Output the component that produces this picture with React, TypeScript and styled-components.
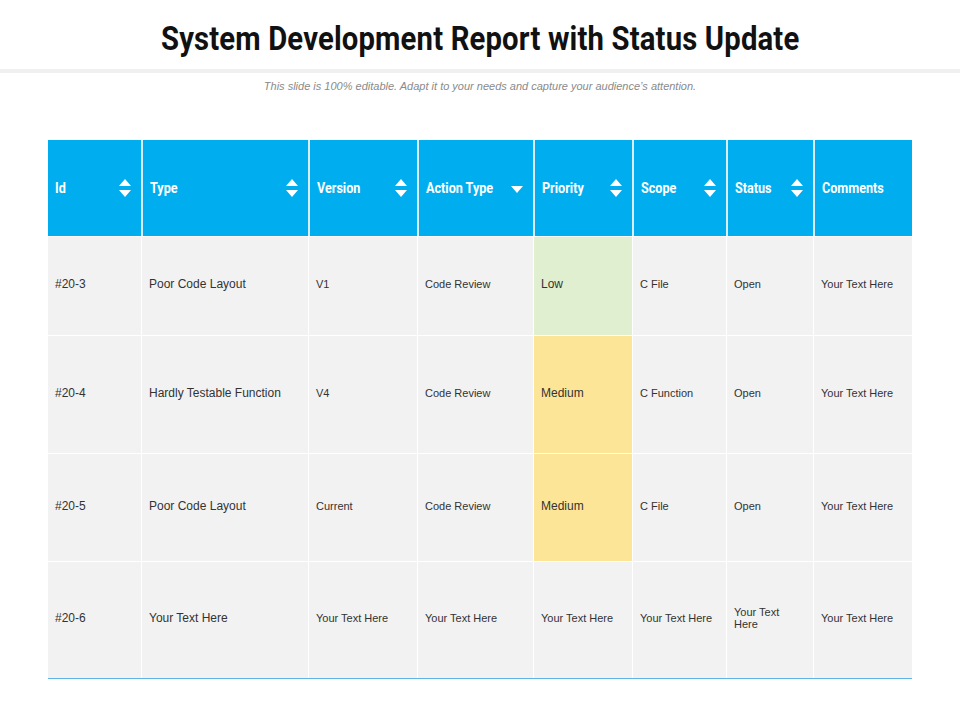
import React from "react";
import styled, { createGlobalStyle } from "styled-components";

const Global = createGlobalStyle`
  body { margin: 0; background: #fff; font-family: "Liberation Sans", Arial, sans-serif; }
`;
const Page = styled.div`width: 960px; height: 720px; display: flex; flex-direction: column; align-items: center;`;
const Title = styled.h1`
  margin: 14px 0 0; height: 48px; font-family: "Roboto", "Liberation Sans", sans-serif; font-weight: 700;
  font-size: 34px; line-height: 48px; color: #111; transform: scaleX(0.86); letter-spacing: 0.2px; white-space: nowrap;
`;
const Rule = styled.div`width: 960px; height: 4px; background: #f0f0f0; margin-top: 7px;`;
const Sub = styled.div`margin-top: 7px; font-size: 11px; font-style: italic; color: #8a8a8a;`;
const Table = styled.div`
  margin-top: 48px; width: 864px; display: grid;
  grid-template-columns: 93px 167px 109px 116px 99px 94px 87px 99px;
  grid-template-rows: 96px 99px 118px 108px 117px;
  border-bottom: 1px solid #5fb4e6;
`;
const Head = styled.div<{ first?: boolean }>`
  background: #00aeef; color: #fff; display: flex; align-items: center; justify-content: space-between;
  padding: 0 10px 0 7px; border-left: ${p => (p.first ? "none" : "2px solid #d9eef8")};
  font-family: "Roboto", "Liberation Sans", sans-serif; font-weight: 700; font-size: 14px;
`;
const HText = styled.span`display: inline-block; transform: scaleX(0.9); transform-origin: left;`;
const Cell = styled.div<{ bg?: string; first?: boolean; size?: number }>`
  background: ${p => p.bg || "#f2f2f2"}; display: flex; align-items: center; padding: 0 7px;
  border-left: ${p => (p.first ? "none" : "1px solid #fff")}; border-top: 1px solid #fff;
  font-size: ${p => p.size || 11}px; color: #333; padding-bottom: 4px;
`;
const Sort = () => (
  <svg width="12" height="18" viewBox="0 0 12 18"><path d="M6 0L12 7H0Z M0 11H12L6 18Z" fill="#fff" /></svg>
);
const Down = () => (
  <svg width="12" height="14" viewBox="0 0 12 14"><path d="M0 5H12L6 12Z" fill="#fff" /></svg>
);

const heads: [string, "s" | "d" | "n"][] = [
  ["Id", "s"], ["Type", "s"], ["Version", "s"], ["Action Type", "d"], ["Priority", "s"], ["Scope", "s"], ["Status", "s"], ["Comments", "n"],
];
const Y = "Your Text Here";
const rows: { c: string[]; bg: string }[] = [
  { c: ["#20-3", "Poor Code Layout", "V1", "Code Review", "Low", "C  File", "Open", Y], bg: "#e0efcf" },
  { c: ["#20-4", "Hardly Testable Function", "V4", "Code Review", "Medium", "C  Function", "Open", Y], bg: "#fde598" },
  { c: ["#20-5", "Poor Code Layout", "Current", "Code Review", "Medium", "C  File", "Open", Y], bg: "#fde598" },
  { c: ["#20-6", Y, Y, Y, Y, Y, Y, Y], bg: "#f2f2f2" },
];
const big = [0, 1, 4];

export default function App() {
  return (
    <Page>
      <Global />
      <Title>System Development Report with Status Update</Title>
      <Rule />
      <Sub>This slide is 100% editable. Adapt it to your needs and capture your audience’s attention.</Sub>
      <Table>
        {heads.map(([h, k], i) => (
          <Head key={h} first={i === 0}>
            <HText>{h}</HText>
            {k === "s" ? <Sort /> : k === "d" ? <Down /> : null}
          </Head>
        ))}
        {rows.map((r, ri) =>
          r.c.map((t, ci) => (
            <Cell key={ri + "-" + ci} first={ci === 0} bg={ci === 4 ? r.bg : undefined}
              size={big.includes(ci) && !(ri === 3 && ci === 4) ? 12 : ci === 1 && ri === 3 ? 12 : 11}>
              {t}
            </Cell>
          ))
        )}
      </Table>
    </Page>
  );
}
